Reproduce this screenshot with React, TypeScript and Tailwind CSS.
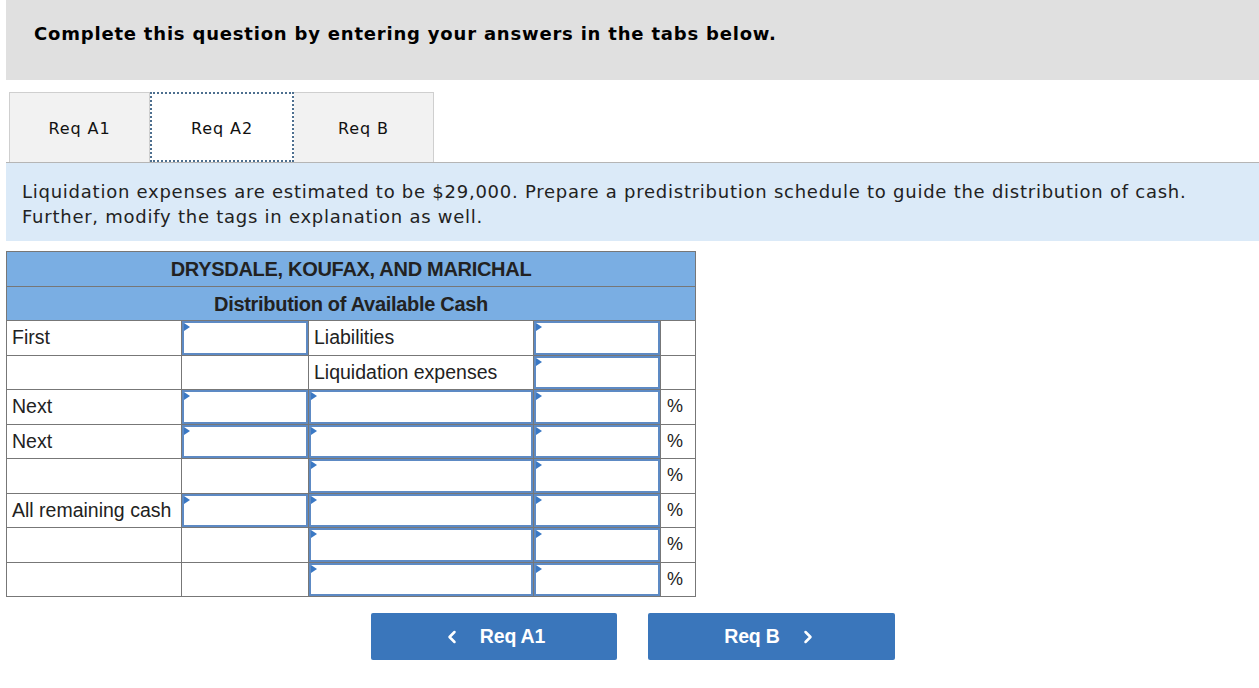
import { ChevronLeft, ChevronRight } from "lucide-react";

type Cell = { text?: string; input?: boolean };
type Row = { label: string; amount: boolean; desc: Cell; value: boolean; pct: boolean };

const rows: Row[] = [
  { label: "First", amount: true, desc: { text: "Liabilities" }, value: true, pct: false },
  { label: "", amount: false, desc: { text: "Liquidation expenses" }, value: true, pct: false },
  { label: "Next", amount: true, desc: { input: true }, value: true, pct: true },
  { label: "Next", amount: true, desc: { input: true }, value: true, pct: true },
  { label: "", amount: false, desc: { input: true }, value: true, pct: true },
  { label: "All remaining cash", amount: true, desc: { input: true }, value: true, pct: true },
  { label: "", amount: false, desc: { input: true }, value: true, pct: true },
  { label: "", amount: false, desc: { input: true }, value: true, pct: true },
];

function InputBox() {
  return (
    <div className="relative h-full w-full border-2 border-[#5d8ac4] bg-white">
      <span className="absolute left-0 top-0 h-0 w-0 border-y-[4px] border-l-[6px] border-y-transparent border-l-[#3a78c4]" />
    </div>
  );
}

export default function App() {
  return (
    <div className="min-h-[688px] bg-white pl-[6px] font-['DejaVu_Sans',Verdana,sans-serif] text-[#111]">
      <div className="flex h-[80px] items-start bg-[#e0e0e0] pl-[28px] pt-[21px]">
        <h1 className="text-[18px] font-bold leading-[26px] tracking-[0.8px] text-black">
          Complete this question by entering your answers in the tabs below.
        </h1>
      </div>

      <div className="mt-[12px] flex border-b border-[#b5b5b5] pl-[3px]">
        <div className="flex h-[70px] w-[141px] items-center justify-center border border-b-0 border-[#cfcfcf] bg-[#f2f2f2] pt-[3px] text-[16px] tracking-[0.9px]">
          Req A1
        </div>
        <div className="flex h-[70px] w-[144px] items-center justify-center border-2 border-dotted border-[#4d6f8f] bg-white pt-[3px] text-[16px] tracking-[0.9px]">
          Req A2
        </div>
        <div className="flex h-[70px] w-[140px] items-center justify-center border border-b-0 border-l-0 border-[#cfcfcf] bg-[#f2f2f2] pt-[3px] text-[16px] tracking-[0.9px]">
          Req B
        </div>
      </div>

      <div className="h-[78px] bg-[#dbeaf8] pl-[16px] pt-[16px] text-[18px] leading-[25px] tracking-[0.75px] text-[#222]">
        <p>
          Liquidation expenses are estimated to be $29,000. Prepare a predistribution schedule to guide the distribution of cash.
        </p>
        <p>Further, modify the tags in explanation as well.</p>
      </div>

      <table className="mt-[10px] w-[690px] table-fixed border-collapse font-['Liberation_Sans',Arial,sans-serif] text-[19.5px] text-[#222]">
        <colgroup>
          <col className="w-[175px]" />
          <col className="w-[127px]" />
          <col className="w-[225px]" />
          <col className="w-[127px]" />
          <col className="w-[35px]" />
        </colgroup>
        <thead>
          <tr className="h-[35px] bg-[#7aaee3]">
            <th colSpan={5} className="border border-[#777] text-center text-[20px] font-bold tracking-[-0.3px]">
              DRYSDALE, KOUFAX, AND MARICHAL
            </th>
          </tr>
          <tr className="h-[34px] bg-[#7aaee3]">
            <th colSpan={5} className="border border-[#777] text-center text-[20px] font-bold tracking-[-0.3px]">
              Distribution of Available Cash
            </th>
          </tr>
        </thead>
        <tbody>
          {rows.map((r, i) => (
            <tr key={i} className="h-[34.5px]">
              <td className="border border-[#777] px-[5px]">{r.label}</td>
              <td className="h-[34.5px] border border-[#777] p-0">{r.amount && <InputBox />}</td>
              <td className="h-[34.5px] border border-[#777] p-0">
                {r.desc.input ? <InputBox /> : <span className="px-[5px]">{r.desc.text}</span>}
              </td>
              <td className="h-[34.5px] border border-[#777] p-0">{r.value && <InputBox />}</td>
              <td className="border border-[#777] px-[6px] text-[18px]">{r.pct ? "%" : ""}</td>
            </tr>
          ))}
        </tbody>
      </table>

      <div className="mt-[16px] flex justify-center gap-[31px] font-['Liberation_Sans',Arial,sans-serif]">
        <button className="flex h-[47px] w-[246px] items-center justify-center gap-[18px] rounded-[2px] bg-[#3a76bb] text-[19.5px] font-bold text-white">
          <ChevronLeft size={20} strokeWidth={3} />
          <span className="tracking-[-0.2px]">Req A1</span>
        </button>
        <button className="flex h-[47px] w-[247px] items-center justify-center gap-[18px] rounded-[2px] bg-[#3a76bb] text-[19.5px] font-bold text-white">
          <span className="tracking-[-0.2px]">Req B</span>
          <ChevronRight size={20} strokeWidth={3} />
        </button>
      </div>
    </div>
  );
}
